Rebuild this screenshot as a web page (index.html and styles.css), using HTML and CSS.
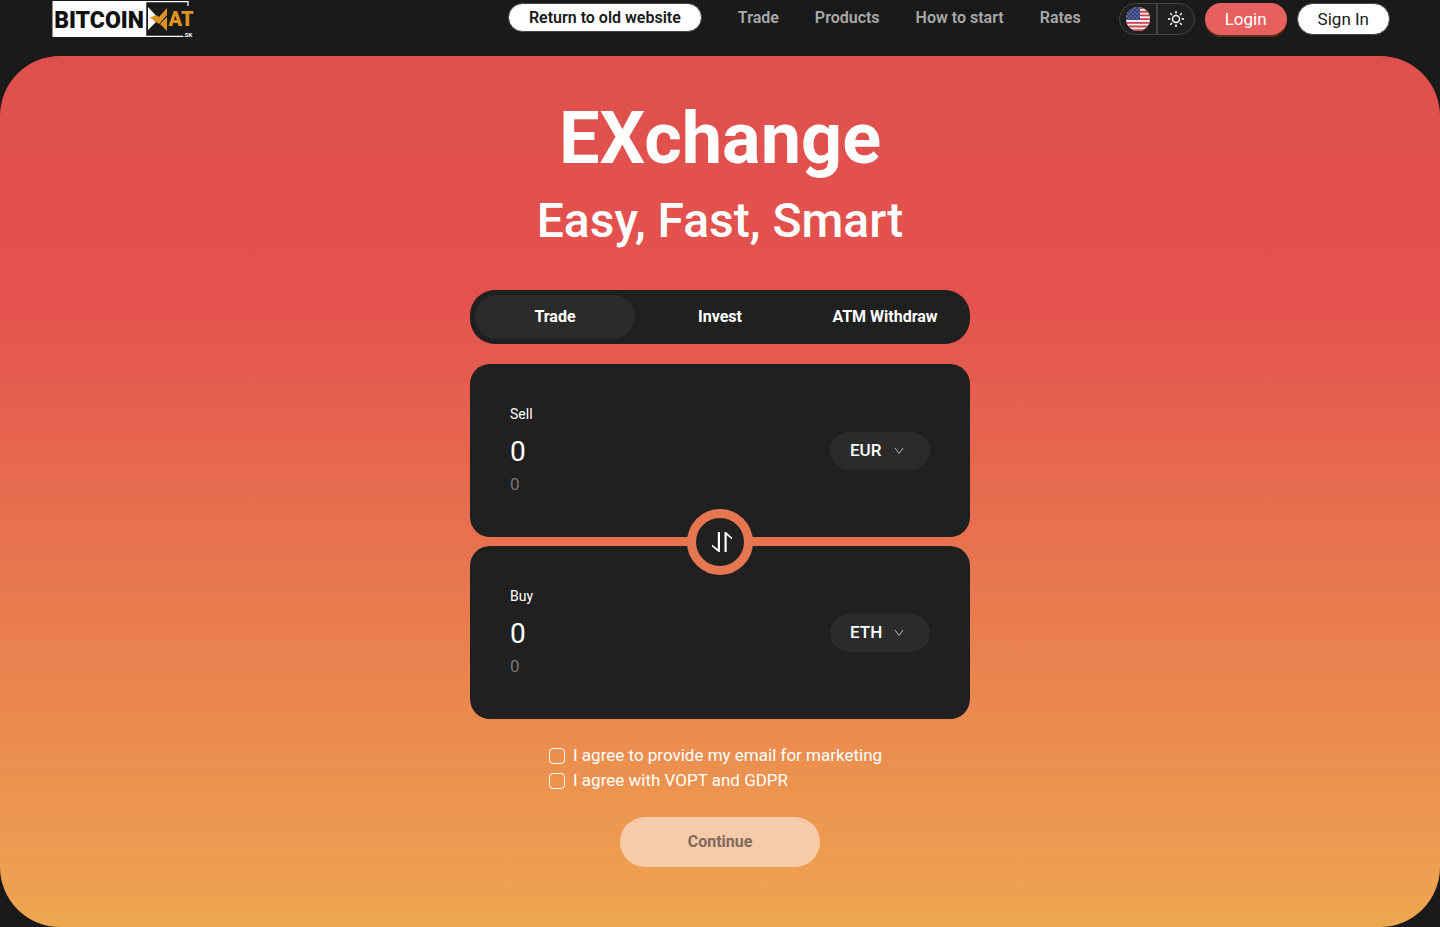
FILE: index.html
```html
<!doctype html>
<html lang="en">
<head>
	<meta charset="UTF-8" />
	<meta name="viewport" content="width=device-width, initial-scale=1" />
	<title>Bitcoinmat - Exchange</title>
	<link rel="stylesheet" href="styles.css">
</head>
<body>

<header class="header">
	<a class="logo" href="#" aria-label="Bitcoinmat.sk">
		<svg width="144" height="38" viewBox="0 0 144 38">
			<rect x="0.500" y="1" width="92.500" height="36" fill="#fff" />
			<path d="M93 1.700H136V6M93.600 1V36.300H131" fill="none" stroke="#fff" stroke-width="1.300" />
			<text class="logo-name" x="47" y="28" text-anchor="middle">BITCOIN</text>
			<path d="M96 7L104 15.500L99.500 18L104 22L96 30Z" fill="#fff" />
			<path d="M98 17.500L104 15L107 17L115 8V15L107 24Z" fill="#e0941f" />
			<path d="M108 24L115 17V31Z" fill="#e0941f" />
			<text class="logo-name logo-at" x="129" y="26" text-anchor="middle">AT</text>
			<text class="logo-sk" x="131" y="37">.SK</text>
		</svg>
	</a>

	<nav class="nav">
		<a class="old-site" href="#">Return to old website</a>
		<a href="#">Trade</a>
		<a href="#">Products</a>
		<a href="#">How to start</a>
		<a href="#">Rates</a>
	</nav>

	<div class="actions">
		<div class="switches">
			<button type="button" aria-label="Language">
				<svg width="24" height="24" viewBox="0 0 24 24">
					<defs>
						<clipPath id="round"><circle cx="12" cy="12" r="12" /></clipPath>
						<pattern id="stars" width="4" height="4" patternUnits="userSpaceOnUse">
							<circle cx="1" cy="1" r="0.600" fill="#c5cce4" />
							<circle cx="3" cy="3" r="0.600" fill="#c5cce4" />
						</pattern>
					</defs>
					<g clip-path="url(#round)">
						<rect width="24" height="24" fill="#f5f0f0" />
						<path d="M0 1H24M0 4.700H24M0 8.400H24M0 12.100H24M0 15.800H24M0 19.500H24M0 23.200H24" stroke="#c8434e" stroke-width="1.850" />
						<rect width="14" height="13" fill="#33427d" />
						<rect width="14" height="13" fill="url(#stars)" />
					</g>
				</svg>
			</button>
			<button type="button" aria-label="Light theme">
				<svg width="18" height="18" viewBox="0 0 18 18" fill="none" stroke="#fff" stroke-width="1.500">
					<circle cx="9" cy="9" r="3.500" />
					<path d="M9 1V3.400M9 14.600V17M1 9H3.400M14.600 9H17M3.300 3.300L5 5M13 13L14.700 14.700M3.300 14.700L5 13M13 5L14.700 3.300" />
				</svg>
			</button>
		</div>
		<button type="button" class="pill login">Login</button>
		<button type="button" class="pill signin">Sign In</button>
	</div>
</header>

<main class="hero">
	<h1>EXchange</h1>
	<h2>Easy, Fast, Smart</h2>

	<form class="exchange">
		<div class="tabs">
			<button type="button" class="active">Trade</button>
			<button type="button">Invest</button>
			<button type="button">ATM Withdraw</button>
		</div>

		<div class="cards">
			<div class="card">
				<div class="amount">
					<label for="sell">Sell</label>
					<input id="sell" type="text" value="0">
					<span>0</span>
				</div>
				<div class="currency">
					<select aria-label="Sell currency">
						<option>EUR</option>
						<option>ETH</option>
					</select>
					<svg width="10" height="8" viewBox="0 0 10 8" fill="none" stroke="#b8b8b8"><path d="M1 1L5 6.500L9 1" /></svg>
				</div>
			</div>
			<div class="card">
				<div class="amount">
					<label for="buy">Buy</label>
					<input id="buy" type="text" value="0">
					<span>0</span>
				</div>
				<div class="currency">
					<select aria-label="Buy currency">
						<option>ETH</option>
						<option>EUR</option>
					</select>
					<svg width="10" height="8" viewBox="0 0 10 8" fill="none" stroke="#b8b8b8"><path d="M1 1L5 6.500L9 1" /></svg>
				</div>
			</div>
			<button type="button" class="swap" aria-label="Swap currencies">
				<svg width="24" height="22" viewBox="0 0 24 22" fill="#fff">
					<path d="M9.800 1H12V21H10.500L4 15.500V13.500L9.800 18Z" />
					<path d="M18.700 21H16.500V1H18L24 6.500V8.500L18.700 4Z" />
				</svg>
			</button>
		</div>

		<div class="agree">
			<label><input type="checkbox">I agree to provide my email for marketing</label>
			<label><input type="checkbox">I agree with VOPT and GDPR</label>
		</div>

		<button type="submit" class="continue" disabled>Continue</button>
	</form>
</main>

</body>
</html>
```
FILE: styles.css
```css
*{
	box-sizing: border-box;
}
body{
	margin: 0;
	background: #1a1a1a;
	color: #fff;
	font-size: 16px;
	font-family: Roboto, sans-serif;
}
a{text-decoration: none;}
button, input, select{
	margin: 0;
	padding: 0;
	border: 0;
	color: inherit;
	font: inherit;
	background: none;
}

/* header */
.header{
	display: flex;
	align-items: flex-start;
	height: 56px;
	padding: 0 50px 0 52px;
}
.logo svg{display: block;}
.logo-name{
	fill: #111;
	font-size: 23px;
	font-weight: 900;
}
.logo-name.logo-at{
	fill: #e0941f;
	font-size: 20px;
}
.logo-sk{
	fill: #fff;
	font-size: 6px;
	font-weight: 700;
}
.nav{
	display: flex;
	align-items: center;
	gap: 36px;
	margin: 3px 38px 0 auto;
}
.nav a{
	color: #a9a9a9;
	font-weight: 600;
	line-height: 29px;
}
.nav .old-site{
	padding: 0 20px;
	border: 1px solid #444;
	border-radius: 15px;
	background: #fff;
	color: #1a1a1a;
	line-height: 27px;
}
.actions{
	display: flex;
	gap: 10px;
	margin-top: 3px;
}
.switches{
	display: flex;
	width: 76px;
	height: 32px;
	border: 1px solid #444;
	border-radius: 16px;
	background: #202020;
}
.switches button{
	display: flex;
	flex: 1;
	align-items: center;
	justify-content: center;
}
.switches button + button{border-left: 2px solid #444;}
.pill{
	height: 32px;
	padding: 0 20px;
	border-radius: 16px;
	font-size: 17px;
}
.login{
	background: #e66060;
	box-shadow: 0 2px 0 #5c3210;
}
.signin{
	border: 1px solid #444;
	background: #fff;
	color: #1a1a1a;
}

/* hero */
.hero{
	min-height: calc(100vh - 56px);
	padding: 41px 20px 60px;
	border-radius: 60px;
	background: linear-gradient(#df504c, #e4524e 28%, #eea650);
	text-align: center;
}
h1{
	margin: 0;
	font-size: 72px;
	font-weight: 700;
	line-height: 84px;
}
h2{
	margin: 12px 0 41px;
	font-size: 48px;
	font-weight: 500;
	line-height: 56px;
}
.exchange{
	display: flex;
	flex-direction: column;
	align-items: center;
	max-width: 500px;
	margin: 0 auto;
}
.tabs{
	display: flex;
	gap: 5px;
	width: 100%;
	padding: 5px;
	border-radius: 25px;
	background: #202020;
}
.tabs button{
	flex: 1;
	height: 44px;
	padding-bottom: 2px;
	border-radius: 22px;
	font-weight: 700;
}
.tabs .active{background: #2b2b2b;}
.cards{
	position: relative;
	display: grid;
	gap: 9px;
	width: 100%;
	margin: 20px 0 24px;
}
.card{
	display: flex;
	align-items: center;
	justify-content: space-between;
	padding: 40px;
	border-radius: 20px;
	background: #202020;
	text-align: left;
}
.amount{
	display: flex;
	flex-direction: column;
}
.amount label{
	font-size: 14px;
	line-height: 20px;
}
.amount input{
	width: 200px;
	height: 55px;
	font-size: 28px;
}
.amount span{
	height: 18px;
	color: #767676;
	font-size: 17px;
	line-height: 10px;
}
.currency{
	display: flex;
	align-items: center;
	width: 100px;
	height: 38px;
	padding-left: 20px;
	border-radius: 19px;
	background: #2b2b2b;
}
.currency select{
	margin-right: 11px;
	padding-bottom: 2px;
	appearance: none;
	font-size: 17px;
	font-weight: 500;
}
.swap{
	position: absolute;
	top: 50%;
	left: 50%;
	display: flex;
	align-items: center;
	justify-content: center;
	width: 66px;
	height: 66px;
	border: 9px solid #e5764f;
	border-radius: 50%;
	background: #202020;
	transform: translate(-50%, -50%);
}
.agree{
	width: 342px;
	font-size: 17px;
	line-height: 25px;
	text-align: left;
}
.agree label{
	display: flex;
	align-items: center;
	gap: 8px;
}
.agree input{
	width: 16px;
	height: 16px;
	border: 1px solid #fff;
	border-radius: 4px;
	appearance: none;
}
.agree input:checked{background: #fff;}
.continue{
	width: 200px;
	height: 50px;
	margin-top: 24px;
	padding-bottom: 2px;
	border-radius: 25px;
	background: #f5cba9;
	color: #82695a;
	font-weight: 700;
}
```
